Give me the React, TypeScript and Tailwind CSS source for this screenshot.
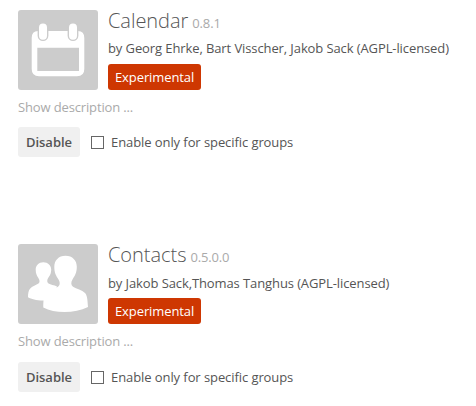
import React from "react";

function CalendarIcon() {
  return (
    <svg viewBox="0 0 80 80" className="size-20" aria-hidden="true">
      <path
        fill="#fff"
        fillRule="evenodd"
        d="M20 21H60Q66.3 21 66.3 28V59Q66.3 66.3 59 66.3H21Q13.7 66.3 13.7 59V28Q13.7 21 20 21ZM19.3 37.7V61H61V37.7Z"
      />
      <rect x="20.3" y="12.7" width="9.4" height="17.7" rx="4.7" fill="#fff" stroke="#ccc" strokeWidth="1.4" />
      <rect x="50.3" y="12.7" width="9.4" height="17.7" rx="4.7" fill="#fff" stroke="#ccc" strokeWidth="1.4" />
    </svg>
  );
}

function ContactsIcon() {
  return (
    <svg viewBox="0 0 80 80" className="size-20" fill="#fff" aria-hidden="true">
      <path d="M25.3 18.2C30 18.2 33.2 21.5 33.2 25.5C33.2 30 31.8 31.4 30 34.2C28.8 36.2 29 38.5 30.5 39.6C32.5 41 36 41.2 39 42.5L34 56.5H25C18 56.5 13.5 55 10 53.3C10 49.5 10.5 46.5 12 44.8C14 42.5 18.5 41 20.5 39.6C22 38.5 21.8 36.2 20.5 34.2C18.7 31.5 17.7 29.5 17.7 25.5C17.7 21.5 20.7 18.2 25.3 18.2Z" />
      <path d="M47.5 11.8C54.5 11.8 58.8 16.5 58.8 22.8C58.8 29 56.8 31.8 54.5 35.5C52.8 38.2 52.8 41.2 55 42.7C58.5 44.8 64 46 67 49C69.5 51.5 69.5 57 70 63C63 66.3 55 68 46.5 68C38.5 68 31 66.5 25.3 63.5C25.3 57.5 25.5 52 28 49C30.5 46 36.5 44.7 40 42.7C42.3 41.2 42.1 38.2 40.5 35.5C38 31.5 36.3 29 36.3 22.8C36.3 16.5 40.5 11.8 47.5 11.8Z" />
    </svg>
  );
}

interface AppEntryProps {
  name: string;
  version: string;
  authors: string;
  icon: React.ReactNode;
  detailsClass: string;
  controlsClass: string;
}

function AppEntry({ name, version, authors, icon, detailsClass, controlsClass }: AppEntryProps) {
  return (
    <section className="h-[234px]">
      <div className="flex gap-2.5">
        <div className="size-20 shrink-0 overflow-hidden rounded-[3px] bg-[#ccc]">{icon}</div>
        <div className="flex h-20 flex-col items-start whitespace-nowrap">
          <h2 className="flex h-5 items-baseline gap-1 text-xl leading-[22px] font-light text-[#555]">
            <span className="tracking-[-0.04px]">{name}</span>
            <small className="text-[13px] font-normal tracking-[-0.15px] text-[#aaa]">{version}</small>
          </h2>
          <p className={detailsClass}>{authors}</p>
          <span className="mt-auto h-[26px] w-[93px] rounded-[3px] bg-[#ce3702] px-[7px] leading-[26px] text-white">
            Experimental
          </span>
        </div>
      </div>
      <p className="mt-2 leading-[18px] tracking-[-0.14px] text-[#aaa]">Show description ...</p>
      <div className={controlsClass}>
        <button className="h-[30px] w-[62px] rounded-[3px] bg-[#f0f0f0] text-center leading-5 font-semibold tracking-normal">
          Disable
        </button>
        <label className="ml-[11px] flex items-center gap-[7px]">
          <input type="checkbox" className="size-[13px] appearance-none border border-[#666] bg-white" />
          <span className="leading-5 tracking-[-0.08px]">Enable only for specific groups</span>
        </label>
      </div>
    </section>
  );
}

export default function App() {
  return (
    <main className="h-[406px] w-[476px] overflow-hidden bg-white pt-2.5 pl-[18px] font-['Open_Sans',sans-serif] text-[13px] tracking-[-0.1px] text-[#555]">
      <AppEntry
        name="Calendar"
        version="0.8.1"
        authors="by Georg Ehrke, Bart Visscher, Jakob Sack (AGPL-licensed)"
        icon={<CalendarIcon />}
        detailsClass="mt-[9px] leading-[18px]"
        controlsClass="mt-[11px] flex items-center"
      />
      <AppEntry
        name="Contacts"
        version="0.5.0.0"
        authors="by Jakob Sack,Thomas Tanghus (AGPL-licensed)"
        icon={<ContactsIcon />}
        detailsClass="mt-2.5 leading-[18px]"
        controlsClass="mt-3 flex items-center"
      />
    </main>
  );
}
